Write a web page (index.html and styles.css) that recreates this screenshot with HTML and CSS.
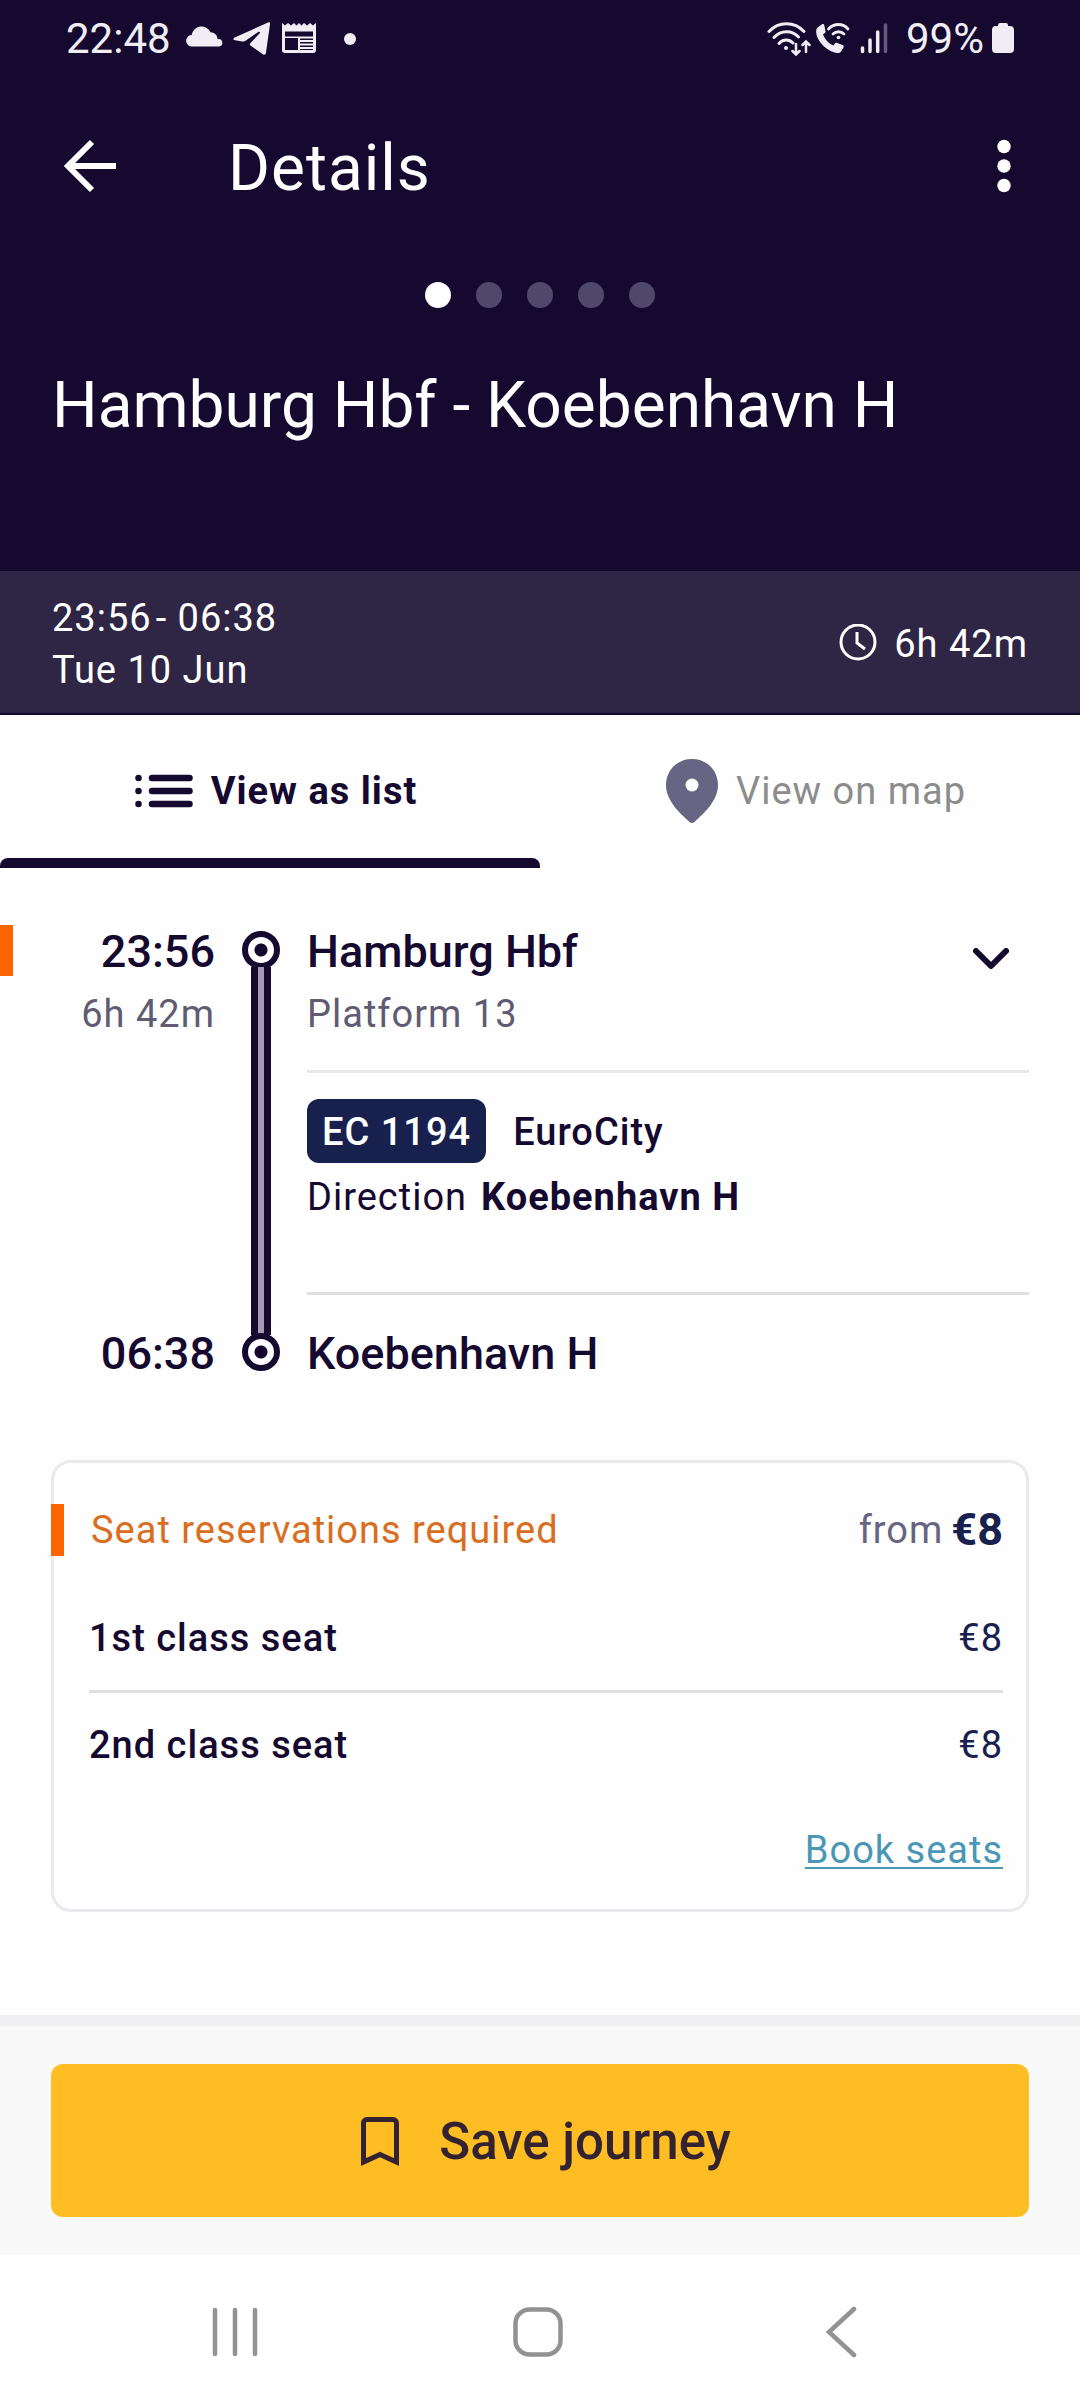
FILE: index.html
```html
<!DOCTYPE html>
<html lang="en">
<head>
  <meta charset="UTF-8">
  <meta name="viewport" content="width=device-width, initial-scale=1.0">
  <title>Details | Hamburg Hbf - Koebenhavn H</title>
  <link rel="stylesheet" href="styles.css">
</head>
<body>
  <header class="header">
    <div class="status-bar">
      <div class="status-group">
        <span class="status-time">22:48</span>
        <svg class="icon-cloud" width="38" height="34" viewBox="0 0 38 34" fill="currentColor">
          <path d="M6 24.500a5.600 5.600 0 0 1-.4-11.400A10 10 0 0 1 24.600 10.300A7.400 7.400 0 0 1 31.800 17.200A3.700 3.700 0 0 1 33.300 24.500Z"/>
        </svg>
        <svg class="icon-plane" width="38" height="34" viewBox="0 0 38 34" fill="currentColor">
          <path d="M35 .600C36.400 0 37.200.600 37 2.200L33 30.500C32.700 32.800 31.400 33.200 29.800 32.200L17.500 23.600C16.500 22.900 16.500 22 17.300 21.200L26.500 11.500C27.600 10.200 26.300 9.200 24.800 10.200L12.500 18.800C11.500 19.500 10.500 19.800 9.300 19.500L2 18.200C0 17.800-.200 16.400 1.700 15.500Z"/>
        </svg>
        <svg class="icon-news" width="34" height="34" viewBox="0 0 34 34">
          <path fill="currentColor" d="M0 1l3 2.500L6 1l3 2.500L12 1l2.500 2.500L17 1l2.500 2.500L22 1l3 2.500L28 1l3 2.500L34 1V28a3 3 0 0 1-3 3H3a3 3 0 0 1-3-3Z"/>
          <path fill="#160930" d="M3 9.500h28v5H3zM3 16h13v12H3zM18 16.500h13v1.500H18zM18 20h13v1.500H18zM18 23.500h13v1.500H18zM18 27h13v1H18z"/>
        </svg>
        <span class="status-dot"></span>
      </div>
      <div class="status-group">
        <svg width="44" height="36" viewBox="0 0 44 36" fill="none" stroke="currentColor" stroke-width="3" stroke-linecap="round">
          <path d="M2 10.500C11.500 0 27.500 0 37 10.500M7 16.500C14 9 25 9 31.500 16M12 22.500C16 18 22 18 26 22"/>
          <circle cx="19" cy="27" r="2" fill="currentColor" stroke="none"/>
          <path stroke-width="2.500" d="M29 23v10M25.500 30l3.500 3.500l3.500-3.500M39 31V20.500M35.500 24l3.500-3.500l3.500 3.500"/>
        </svg>
        <svg class="icon-call" width="36" height="34" viewBox="0 0 36 34" fill="none" stroke="currentColor" stroke-width="2.800" stroke-linecap="round">
          <path fill="currentColor" stroke="none" d="M2.500 5.500L7 2.200c1-.6 2-.2 2.300 1l1.200 6c.2 1-.2 1.600-1.200 2.200l-1.300.9c1.500 5 6 9.500 10.500 11.200l1-1.600c.7-1 1.600-1.300 2.700-.9l5.400 2c1.200.5 1.500 1.400.9 2.500l-2.500 4c-.8 1.300-2.300 1.700-4.200 1.400C10.500 29 .5 17.500 1.200 8.500c.1-1.300.5-2.300 1.300-3Z"/>
          <path d="M13.500 7C19 1 28 1 33 7M18 12C21 9 26 9 29 12"/>
          <circle cx="23.500" cy="15.500" r="1.800" fill="currentColor" stroke="none"/>
        </svg>
        <svg class="icon-signal" width="28" height="34" viewBox="0 0 28 34" fill="none" stroke="currentColor" stroke-width="3.500" stroke-linecap="round">
          <path d="M2.500 26v3.500M10 18v11.500M17.700 10v19.500"/>
          <path stroke="#66597f" d="M25.500 3v26.500"/>
        </svg>
        <span class="status-battery">99%</span>
        <svg width="22" height="34" viewBox="0 0 22 34" fill="currentColor">
          <path d="M6 3a2 2 0 0 1 2-2h6a2 2 0 0 1 2 2v1h2a4 4 0 0 1 4 4v19a4 4 0 0 1-4 4H4a4 4 0 0 1-4-4V8a4 4 0 0 1 4-4h2Z"/>
        </svg>
      </div>
    </div>

    <div class="app-bar">
      <button class="icon-button" aria-label="Back">
        <svg width="52" height="54" viewBox="0 0 52 54" fill="none" stroke="currentColor" stroke-width="6">
          <path d="M28 3L4 27l24 24M4 27h48"/>
        </svg>
      </button>
      <h1 class="app-title">Details</h1>
      <button class="icon-button" aria-label="More options">
        <svg width="14" height="54" viewBox="0 0 14 54" fill="currentColor">
          <circle cx="7" cy="7.500" r="6.700"/><circle cx="7" cy="27" r="6.700"/><circle cx="7" cy="46.500" r="6.700"/>
        </svg>
      </button>
    </div>

    <div class="pager">
      <span class="pager-dot active"></span>
      <span class="pager-dot"></span>
      <span class="pager-dot"></span>
      <span class="pager-dot"></span>
      <span class="pager-dot"></span>
    </div>
    <h2 class="route">Hamburg Hbf - Koebenhavn H</h2>

    <div class="summary">
      <div>
        <div class="summary-times"><span>23:56</span><span>- 06:38</span></div>
        <div>Tue 10 Jun</div>
      </div>
      <div class="duration">
        <svg width="40" height="40" viewBox="0 0 40 40" fill="none" stroke="currentColor" stroke-width="3">
          <circle cx="20" cy="18" r="17"/>
          <path d="M19 8v11l8 6"/>
        </svg>
        <span>6h 42m</span>
      </div>
    </div>
  </header>

  <nav class="tabs">
    <button class="tab active">
      <svg width="58" height="34" viewBox="0 0 58 34" fill="none" stroke="currentColor" stroke-width="6.500" stroke-linecap="round">
        <path d="M3.500 4h.01M3.500 17h.01M3.500 30h.01M17 4h37.500M17 17h37.500M17 30h37.500"/>
      </svg>
      <span>View as list</span>
    </button>
    <button class="tab">
      <svg width="52" height="66" viewBox="0 0 52 66">
        <path fill="#666684" d="M26 1C11 1 0 12.500 0 27C0 43 14 55 23.500 64Q26 66 28.500 64C38 55 52 43 52 27C52 12.500 41 1 26 1Z"/>
        <circle cx="26" cy="27" r="6.500" fill="#fff"/>
      </svg>
      <span>View on map</span>
    </button>
  </nav>

  <main class="content">
    <section class="journey">
      <span class="alert-bar"></span>
      <div class="times">
        <div class="stop-text">23:56</div>
        <div class="muted">6h 42m</div>
      </div>
      <div class="track">
        <span class="stop-dot"></span>
        <span class="rail"></span>
      </div>
      <div class="leg">
        <div class="stop">
          <div>
            <div class="stop-text">Hamburg Hbf</div>
            <div class="muted">Platform 13</div>
          </div>
          <button class="icon-button chevron" aria-label="Show stops">
            <svg width="36" height="22" viewBox="0 0 36 22" fill="none" stroke="currentColor" stroke-width="6" stroke-linecap="round" stroke-linejoin="round">
              <path d="M3 3l15 15L33 3"/>
            </svg>
          </button>
        </div>
        <div class="train">
          <div class="train-name"><span class="badge">EC 1194</span><span class="train-type">EuroCity</span></div>
          <div class="direction"><span>Direction</span><strong>Koebenhavn H</strong></div>
        </div>
      </div>
      <div class="times arrival stop-text">06:38</div>
      <div class="track arrival"><span class="stop-dot"></span></div>
      <div class="arrival stop-text">Koebenhavn H</div>
    </section>

    <section class="card">
      <div class="card-head">
        <span class="card-alert">Seat reservations required</span>
        <span class="from"><span>from</span><strong>€8</strong></span>
      </div>
      <table class="seats">
        <tr><th scope="row">1st class seat</th><td>€8</td></tr>
        <tr><th scope="row">2nd class seat</th><td>€8</td></tr>
      </table>
      <a class="book" href="#">Book seats</a>
    </section>
  </main>

  <footer class="footer">
    <button class="save">
      <svg width="38" height="50" viewBox="0 0 38 50" fill="none" stroke="currentColor" stroke-width="5">
        <path d="M2.500 45V6a3.500 3.500 0 0 1 3.500-3.500h26a3.500 3.500 0 0 1 3.500 3.500v39L19 37.500Z"/>
      </svg>
      <span>Save journey</span>
    </button>
  </footer>

  <nav class="system-nav">
    <button class="icon-button" aria-label="Recent apps">
      <svg width="50" height="52" viewBox="0 0 50 52" fill="none" stroke="currentColor" stroke-width="4.500" stroke-linecap="round">
        <path d="M5 4v44M25 4v44M45 4v44"/>
      </svg>
    </button>
    <button class="icon-button" aria-label="Home">
      <svg width="50" height="52" viewBox="0 0 50 52" fill="none" stroke="currentColor" stroke-width="4.500">
        <rect x="2.500" y="3.500" width="45" height="45" rx="14"/>
      </svg>
    </button>
    <button class="icon-button" aria-label="Back">
      <svg width="32" height="52" viewBox="0 0 32 52" fill="none" stroke="currentColor" stroke-width="4.500" stroke-linecap="round">
        <path d="M29 3L4 26l25 23"/>
      </svg>
    </button>
  </nav>
</body>
</html>
```
FILE: styles.css
```css
* {
  margin: 0;
  padding: 0;
  box-sizing: border-box;
}

body {
  min-height: 100vh;
  display: flex;
  flex-direction: column;
  background: #fefefe;
  color: #160930;
  font-family: Roboto, "Liberation Sans", sans-serif;
  font-size: 38px;
  line-height: 52px;
  letter-spacing: 1px;
}

svg {
  display: block;
  flex: none;
}

button {
  border: none;
  background: none;
  color: inherit;
  font: inherit;
  letter-spacing: inherit;
  cursor: pointer;
}

/* header */
.header {
  background: #160930;
  color: #ffffff;
  border-bottom: 2px solid #160930;
}

.status-bar {
  display: flex;
  justify-content: space-between;
  height: 76px;
  padding: 2px 66px 0;
  color: #f0edf5;
  font-size: 42px;
  letter-spacing: 0;
}

.status-group {
  display: flex;
  align-items: center;
}

.icon-cloud { margin-left: 15px; }
.icon-plane { margin-left: 9px; }
.icon-news { margin-left: 11px; }
.icon-call { margin-left: 4px; }
.icon-signal { margin-left: 9px; }

.status-dot {
  width: 12px;
  height: 12px;
  margin-left: 28px;
  border-radius: 50%;
  background: currentColor;
}

.status-battery {
  margin: 0 8px 0 18px;
}

.app-bar {
  display: flex;
  align-items: center;
  height: 180px;
  padding: 0 69px 0 64px;
}

.app-title {
  flex: 1;
  margin-left: 112px;
  padding-top: 6px;
  font-size: 64px;
  font-weight: 400;
}

.pager {
  display: flex;
  justify-content: center;
  gap: 25px;
  padding-top: 26px;
}

.pager-dot {
  width: 26px;
  height: 26px;
  border-radius: 50%;
  background: #50486a;
}

.pager-dot.active {
  background: #ffffff;
}

.route {
  padding: 60px 52px 127px;
  font-size: 64px;
  font-weight: 400;
  line-height: 76px;
  letter-spacing: 0;
}

.summary {
  display: flex;
  justify-content: space-between;
  align-items: center;
  padding: 21px 52px 17px;
  background: #2f2545;
}

.summary-times {
  display: flex;
  gap: 4px;
}

.duration {
  display: flex;
  align-items: center;
  gap: 16px;
}

/* tabs */
.tabs {
  display: grid;
  grid-template-columns: 1fr 1fr;
}

.tab {
  position: relative;
  display: flex;
  align-items: center;
  justify-content: center;
  gap: 18px;
  height: 153px;
  padding: 0 0 1px 12px;
  color: #8c8c8c;
}

.tab.active {
  color: #160930;
  font-weight: 700;
}

.tab.active::after {
  content: "";
  position: absolute;
  left: 0;
  right: 0;
  bottom: 0;
  height: 10px;
  border-radius: 8px 8px 0 0;
  background: #160930;
}

/* journey */
.content {
  flex: 1;
  padding: 52px 51px;
}

.journey {
  position: relative;
  display: grid;
  grid-template-columns: 164px 38px 1fr;
  column-gap: 27px;
}

.alert-bar {
  position: absolute;
  left: -51px;
  top: 5px;
  width: 13px;
  height: 51px;
  background: #fb6500;
}

.times {
  text-align: right;
}

.stop-text {
  font-size: 45px;
  font-weight: 500;
  line-height: 64px;
  letter-spacing: 0;
}

.muted {
  color: #5f5b72;
  line-height: 60px;
}

.track {
  display: flex;
  flex-direction: column;
  align-items: center;
  padding-top: 11px;
}

.stop-dot {
  width: 38px;
  height: 38px;
  border: 6px solid #160930;
  border-radius: 50%;
  background: radial-gradient(circle, #160930 6px, #ffffff 7px);
}

/* runs on down to the arrival dot */
.rail {
  flex: 1;
  width: 20px;
  margin: -2px 0 -40px;
  border: solid #160930;
  border-width: 0 7px;
  background: #a29bb3;
}

.stop {
  display: flex;
  justify-content: space-between;
  align-items: flex-start;
  padding-bottom: 26px;
  border-bottom: 3px solid #e8e8ec;
}

.chevron {
  margin: 28px 20px 0 0;
}

.train {
  padding: 26px 0 69px;
  border-bottom: 3px solid #e0e0e3;
}

.train-name {
  display: flex;
  align-items: center;
  gap: 27px;
  font-weight: 500;
}

.badge {
  padding: 7px 15px 5px;
  border-radius: 12px;
  background: #18204e;
  color: #ffffff;
}

.train-type {
  padding-top: 2px;
}

.direction {
  display: flex;
  gap: 14px;
  padding-top: 8px;
}

.arrival {
  margin-top: 27px;
}

/* seat reservations */
.card {
  margin-top: 74px;
  padding: 41px 23px 33px 35px;
  border: 3px solid #e9e9ee;
  border-radius: 20px;
}

.card-head {
  display: flex;
  justify-content: space-between;
  margin-left: -38px;
  border-left: 13px solid #fb6500;
}

.card-alert {
  padding-left: 27px;
  color: #d96d20;
}

.from {
  display: flex;
  gap: 8px;
  color: #66647f;
}

.from strong {
  color: #18204e;
  font-size: 45px;
  letter-spacing: 0;
}

.seats {
  width: 100%;
  margin-top: 30px;
  border-collapse: collapse;
}

.seats th,
.seats td {
  padding: 26px 0;
}

.seats th {
  font-weight: 500;
  text-align: left;
}

.seats td {
  color: #18204e;
  text-align: right;
}

.seats tr + tr {
  border-top: 3px solid #e0e0e0;
}

.book {
  display: block;
  width: fit-content;
  margin: 27px 0 0 auto;
  color: #4a96b5;
  text-underline-offset: 4px;
  text-decoration-thickness: 2px;
}

/* footer */
.footer {
  padding: 38px 51px;
  border-top: 11px solid #f0f0f2;
  background: #f9f9f9;
}

.save {
  display: flex;
  align-items: center;
  justify-content: center;
  gap: 40px;
  width: 100%;
  height: 153px;
  padding: 3px 0 0 12px;
  border-radius: 12px;
  background: #ffbd24;
  color: #33222f;
  font-size: 51px;
  font-weight: 500;
  letter-spacing: 0;
}

.system-nav {
  display: grid;
  grid-template-columns: repeat(3, 1fr);
  justify-items: center;
  align-items: center;
  height: 153px;
  padding: 0 88px 0 84px;
  color: #929292;
}
```
